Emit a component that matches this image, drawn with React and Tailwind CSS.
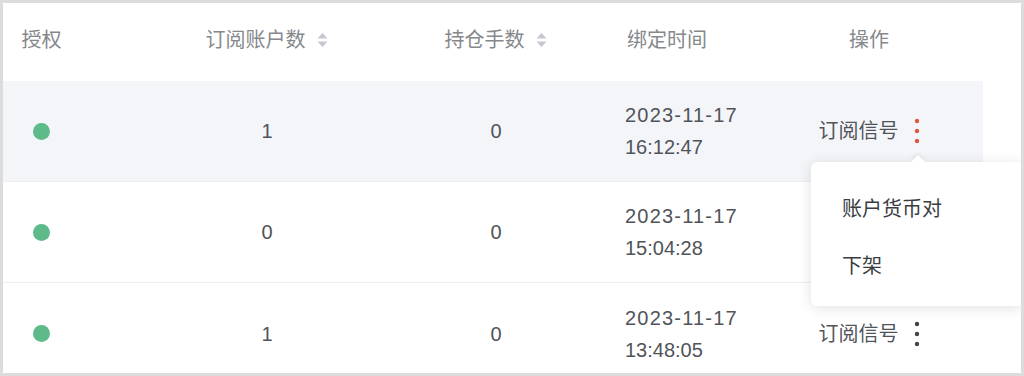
import React from 'react';

const rows = [
  { subs: 1, lots: 0, date: '2023-11-17', time: '16:12:47', active: true },
  { subs: 0, lots: 0, date: '2023-11-17', time: '15:04:28', hideAction: true },
  { subs: 1, lots: 0, date: '2023-11-17', time: '13:48:05' },
];

function SortIcon() {
  return (
    <svg width="13" height="18" viewBox="0 0 13 18" className="ml-[10px] shrink-0">
      <path d="M6.5 2 L11.5 7.5 L1.5 7.5 Z" fill="#c3c7ce" />
      <path d="M1.5 10.5 L11.5 10.5 L6.5 16 Z" fill="#c3c7ce" />
    </svg>
  );
}

function MoreIcon({ color }) {
  return (
    <svg width="6" height="26" viewBox="0 0 6 26" className="ml-[15px] shrink-0">
      <circle cx="3" cy="3" r="2.2" fill={color} />
      <circle cx="3" cy="13" r="2.2" fill={color} />
      <circle cx="3" cy="23" r="2.2" fill={color} />
    </svg>
  );
}

function Row({ row, last }) {
  return (
    <div
      className={`flex h-[101px] items-center text-[20px] text-[#505459] ${
        row.active ? 'bg-[#f4f5f9]' : 'bg-white'
      } ${last ? '' : 'border-b border-[#eceef3]'}`}
    >
      <div className="w-[77px] flex justify-center">
        <span className="block w-[17px] h-[17px] rounded-full bg-[#5fba8a]" />
      </div>
      <div className="w-[374px] flex justify-center">{row.subs}</div>
      <div className="w-[84px] flex justify-center">{row.lots}</div>
      <div className="w-[242px] pl-[87px] flex flex-col leading-[32px]">
        <span className="whitespace-nowrap tracking-[1.2px]">{row.date}</span>
        <span className="whitespace-nowrap">{row.time}</span>
      </div>
      <div className="w-[178px] flex justify-center items-center">
        {!row.hideAction && (
          <>
            <span className="whitespace-nowrap">订阅信号</span>
            <MoreIcon color={row.active ? '#e0573f' : '#444444'} />
          </>
        )}
      </div>
    </div>
  );
}

export default function App() {
  return (
    <div className="relative w-[1024px] h-[376px] overflow-hidden bg-white border-[3px] border-[#dcdcdc] font-['Liberation_Sans','Noto_Sans_CJK_SC',sans-serif]">
      <div className="w-[980px]">
        <div className="flex h-[78px] items-center pb-1 text-[20px] text-[#86888c]">
          <div className="w-[77px] flex justify-center">授权</div>
          <div className="w-[374px] flex justify-center items-center">
            <span className="whitespace-nowrap">订阅账户数</span>
            <SortIcon />
          </div>
          <div className="w-[84px] flex justify-center items-center">
            <span className="whitespace-nowrap">持仓手数</span>
            <SortIcon />
          </div>
          <div className="w-[242px] pl-[89px] whitespace-nowrap">绑定时间</div>
          <div className="w-[178px] flex justify-center">操作</div>
        </div>
        {rows.map((row, i) => (
          <Row key={i} row={row} last={i === rows.length - 1} />
        ))}
      </div>

      {/* dropdown for the first row's action menu */}
      <div className="absolute left-[808px] top-[159px] w-[212px] h-[144px] rounded-md bg-white shadow-[0_2px_14px_rgba(0,0,0,0.12)]">
        <div className="absolute left-[102px] -top-[5px] w-[10px] h-[10px] rotate-45 bg-white shadow-[-2px_-2px_4px_rgba(0,0,0,0.05)]" />
        <div className="relative flex flex-col pl-[31px] pt-[33px] text-[20px] text-[#3a3d42] leading-[28px] gap-[29px]">
          <span>账户货币对</span>
          <span>下架</span>
        </div>
      </div>
    </div>
  );
}
